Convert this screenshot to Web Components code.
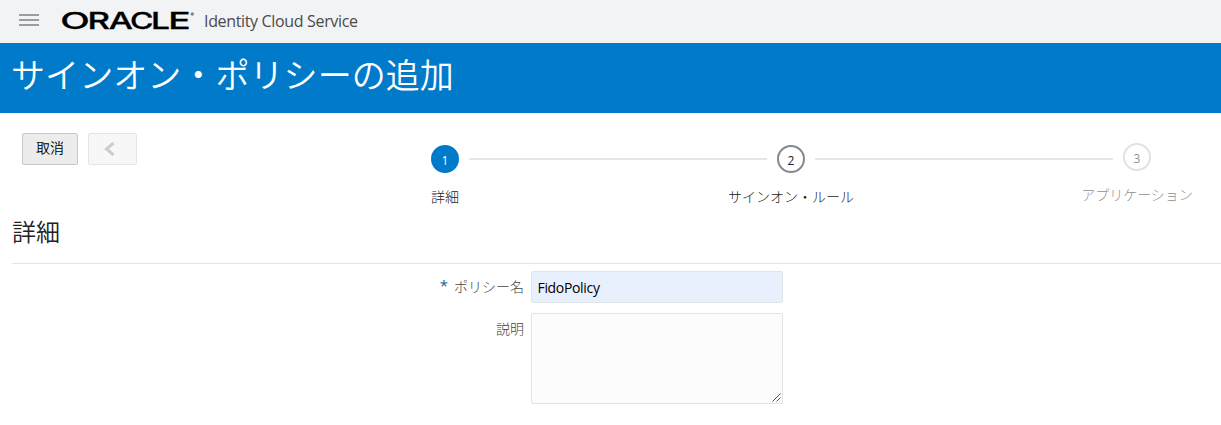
<!DOCTYPE html>
<html lang="ja">
<head>
<meta charset="utf-8">
<title>サインオン・ポリシーの追加</title>
<style>
body{margin:0;background:#fff;color:#333;font:14px/20px "Open Sans","Noto Sans CJK JP",sans-serif}
</style>
</head>
<body>
<policy-page></policy-page>
<script>
const define=(name,html,init)=>customElements.define(name,class extends HTMLElement{
  constructor(){
    super();
    const t=document.createElement('template');
    t.innerHTML=html;
    this.attachShadow({mode:'open'}).append(t.content.cloneNode(true));
    if(init)init(this);
  }
});

define('app-header',`<style>
:host{display:flex;height:43px;background:#f2f3f5;box-sizing:border-box;padding-left:19px;color:#4a4a4a}
.menu{width:20px;height:12px;margin:14px 23px 0 0;display:flex;flex-direction:column;justify-content:space-between;flex:none}
.menu i{height:2px;background:#9a9d9f}
svg{display:block;flex:none;width:134px;height:43px;overflow:visible}
text{font-family:Inter,sans-serif;font-weight:500;fill:#000;stroke:#000;stroke-width:.3}
.name{font:16px/22px "Open Sans",sans-serif;letter-spacing:-.34px;margin:10px 0 0 8px;white-space:nowrap}
</style>
<div class="menu"><i></i><i></i><i></i></div>
<svg viewBox="0 0 134 43" aria-label="Oracle"><text font-size="23" y="28.7"><tspan x="-1.8" textLength="29.5" lengthAdjust="spacingAndGlyphs">O</tspan><tspan x="25.5" textLength="22.5" lengthAdjust="spacingAndGlyphs">R</tspan><tspan x="46.8" textLength="24.2" lengthAdjust="spacingAndGlyphs">A</tspan><tspan x="68" textLength="23.5" lengthAdjust="spacingAndGlyphs">C</tspan><tspan x="89" textLength="19" lengthAdjust="spacingAndGlyphs">L</tspan><tspan x="106.3" textLength="22.4" lengthAdjust="spacingAndGlyphs">E</tspan></text><circle cx="130.3" cy="14" r="1.3" fill="#999" stroke="#666" stroke-width=".7"/></svg>
<div class="name"><slot></slot></div>`);

define('page-title',`<style>
:host{display:block;height:70px;background:#007ac9;color:#fff;box-sizing:border-box;padding:6px 0 0 11px;font:350 34px/50px "Noto Sans CJK JP",sans-serif;letter-spacing:.07px;white-space:nowrap}
</style><slot></slot>`);

define('tool-button',`<style>
:host{display:flex;box-sizing:border-box;height:32px;width:56px;border:1px solid #c8c8c8;border-radius:2px;background:#ececec;color:#000;justify-content:center;align-items:center;padding-bottom:4px;font:350 14px/20px "Noto Sans CJK JP",sans-serif}
:host([disabled]){width:49px;background:#f7f7f7;border-color:#e5e5e5;padding:0 7px 0 0}
::slotted(svg){display:block}
</style><slot></slot>`);

define('train-step',`<style>
:host{display:flex;flex-direction:column;align-items:center;width:28px;flex:none;color:#222}
b{box-sizing:border-box;width:28px;height:28px;border-radius:50%;border:2px solid #85898c;text-align:center;font:12px/27px "Open Sans",sans-serif}
span{white-space:nowrap;margin-top:13px;font:300 14px/20px "Noto Sans CJK JP",sans-serif}
:host([state=current]) b{background:#007ac9;border-color:#007ac9;color:#fff}
:host([state=disabled]){color:#909090;margin-top:-2px}
:host([state=disabled]) b{border-color:#e2e2e2}
</style><b></b><span><slot></slot></span>`,el=>{el.shadowRoot.querySelector('b').textContent=el.getAttribute('number')});

define('step-train',`<style>
:host{display:flex;gap:10px;width:720px}
i{flex:1;height:2px;background:#e5e5e5;margin-top:13px}
</style>
<train-step number="1" state="current">詳細</train-step><i></i>
<train-step number="2">サインオン・ルール</train-step><i></i>
<train-step number="3" state="disabled">アプリケーション</train-step>`);

define('section-title',`<style>
:host{display:block;box-sizing:border-box;height:53px;margin-left:12px;border-bottom:1px solid #e5e5e5;font:350 24px/36px "Noto Sans CJK JP",sans-serif;color:#222;padding-top:2px}
</style><slot></slot>`);

define('form-row',`<style>
:host{display:grid;grid-template-columns:524px 252px;column-gap:7px;margin-bottom:10px}
label{display:flex;justify-content:flex-end;gap:6px;padding-top:5px;color:#444;font:300 14px/20px "Noto Sans CJK JP",sans-serif}
em{display:none;font:15px/18px "Open Sans",sans-serif;color:#1b5f93}
:host([required]) em{display:block}
</style><label><em>*</em><span></span></label><slot></slot>`,el=>{el.shadowRoot.querySelector('span').textContent=el.getAttribute('label')});

define('text-field',`<style>
:host{display:block}
.f{box-sizing:border-box;position:relative;width:252px;height:32px;border:1px solid #dfe4e7;border-radius:2px;background:#e8f0fe;color:#000;padding:5px 5.5px;font:14px/21px "Open Sans",sans-serif;letter-spacing:-.33px}
svg{display:none;position:absolute;right:1px;bottom:1px}
:host([multiline]) .f{height:91px;background:#fcfcfc}
:host([multiline]) svg{display:block}
</style><div class="f"><slot></slot><svg width="9" height="9" viewBox="0 0 9 9"><path d="M.5 8.5l8-8M4.5 8.5l4-4" stroke="#555" stroke-width="1"/></svg></div>`);

define('policy-page',`<style>
:host{display:block;height:425px;overflow:hidden;background:#fff}
.bar{display:flex;height:98px;padding-left:22px}
.buttons{display:flex;gap:10px;padding-top:20px;width:409px;flex:none}
step-train{margin-top:32px}
main{padding-top:7px}
</style>
<app-header>Identity Cloud Service</app-header>
<page-title>サインオン・ポリシーの追加</page-title>
<div class="bar"><div class="buttons"><tool-button>取消</tool-button><tool-button disabled><svg width="11" height="14" viewBox="0 0 11 14"><path d="M9.5 1L2.5 7L9.5 13" fill="none" stroke="#ccc" stroke-width="3"/></svg></tool-button></div><step-train></step-train></div>
<section-title>詳細</section-title>
<main>
<form-row required label="ポリシー名"><text-field>FidoPolicy</text-field></form-row>
<form-row label="説明"><text-field multiline></text-field></form-row>
</main>`);
</script>
</body>
</html>
